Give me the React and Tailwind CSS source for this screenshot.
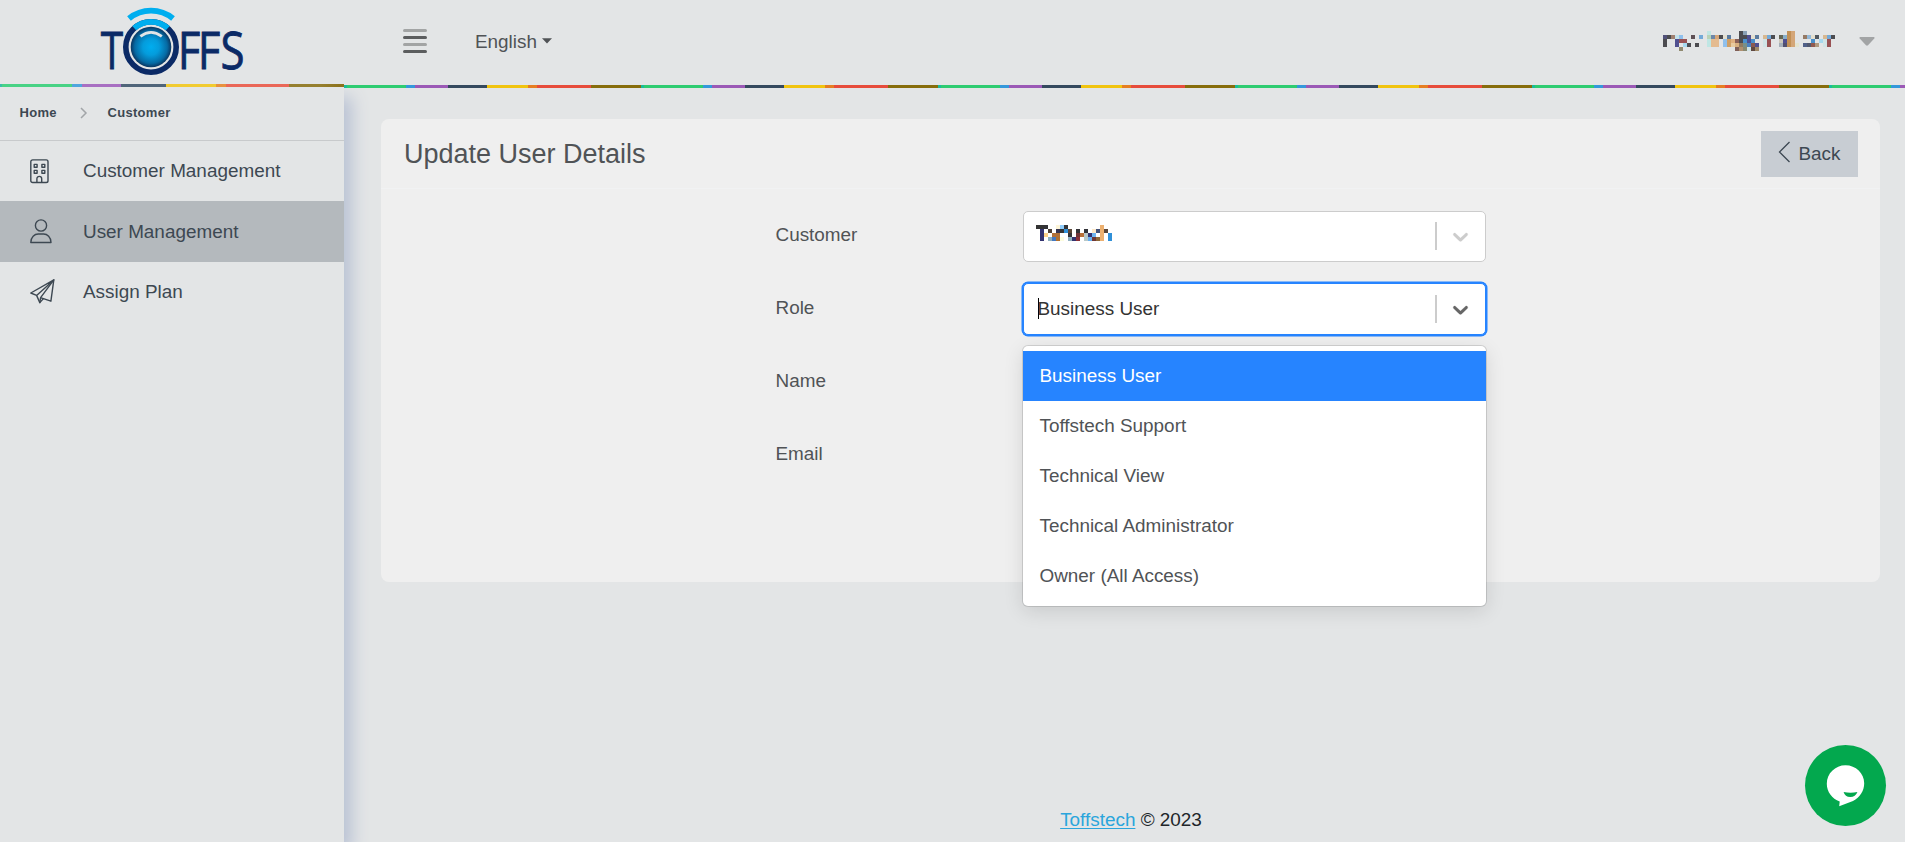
import React from "react";

const N = "#505090", D = "#4c4c50", R = "#985254", C = "#bfe6e4", B = "#90c0ec", M = "#4a90cc", O = "#e4bb90", G = "#c29055", H = "#d4a678", L = "#d0e4e6", S = "#74aad8", T = "#d8b890";

const userCells = [
  { 11: C, 19: D, 20: "#8aa0b5", 31: G, 32: H },
  { 0: "#52527a", 1: D, 2: "#a08070", 3: "#c5e2ea", 4: B, 7: "#5e5055", 9: S, 11: "#b9d3b8", 12: "#6c87a8", 13: H, 14: D, 15: "#e4dfcf", 16: "#5a7a9e", 19: D, 20: D, 21: N, 22: "#e4dfcf", 23: "#5a7a9e", 25: T, 26: S, 27: D, 29: "#666655", 30: "#88aec8", 31: G, 32: H, 35: "#957a65", 36: "#93b8d8", 37: "#e4dfcf", 38: "#505860", 40: T, 41: S, 42: D },
  { 0: D, 3: N, 4: R, 5: R, 11: C, 12: O, 13: O, 15: B, 16: "#cf9f66", 17: "#dfb080", 18: "#8a6058", 19: D, 20: M, 21: N, 22: M, 25: L, 26: R, 29: "#ccc8bb", 30: N, 31: G, 32: H, 37: M, 39: "#a5d8ee", 40: L, 41: R },
  { 0: D, 3: N, 5: "#a5d8ee", 6: D, 8: D, 11: C, 12: O, 13: O, 15: B, 16: "#cf9f66", 17: "#e8cba0", 18: "#d8b080", 19: "#907a60", 20: "#788f88", 21: "#4a80c0", 22: "#8a5a50", 23: N, 25: L, 26: R, 29: "#a5b0ba", 30: "#505070", 31: G, 32: H, 33: "#e4e4d0", 35: "#506088", 36: "#505870", 37: "#905a50", 38: "#b09a80", 40: L, 41: R },
  { 4: "#908a70", 18: "#806058", 19: "#b09070", 20: "#888870", 21: L, 22: "#604840", 23: "#a08a68" },
];

const customerCells = [
  { 0: "#333333", 1: "#333333", 2: "#333338", 5: "#fdf5d8", 6: "#90ccfa", 7: "#333336", 16: "#ecb070" },
  { 1: "#333370", 3: "#4e4036", 5: "#333350", 6: "#333333", 7: "#3090d8", 8: "#5a4638", 10: "#333338", 12: "#333338", 14: "#fde8c8", 15: "#42527a", 16: "#ecb070", 17: "#5a4638" },
  { 1: "#333370", 2: "#fdd088", 4: "#b07038", 5: "#b07038", 8: "#333336", 10: "#703438", 11: "#b87038", 12: "#b8c8c8", 13: "#333370", 14: "#70b4f0", 16: "#ecb070", 18: "#3090d8" },
  { 1: "#333370", 3: "#90b0c0", 4: "#4478c0", 5: "#b07030", 6: "#fdfde0", 8: "#90b0c0", 9: "#333370", 10: "#8a3038", 12: "#b8c8c8", 13: "#68b0f0", 14: "#703838", 15: "#906838", 16: "#ecb070", 18: "#3090d8" },
];

function Mosaic({ rows, cols }) {
  return (
    <svg width={cols * 4} height={rows.length * 4} shapeRendering="crispEdges" className="block shrink-0">
      {rows.map((row, y) =>
        Object.entries(row).map(([x, fill]) => (
          <rect key={x + "-" + y} x={x * 4} y={y * 4} width="4" height="4" fill={fill} />
        ))
      )}
    </svg>
  );
}

function Logo() {
  return (
    <svg width="160" height="90" viewBox="90 0 160 90" className="block shrink-0">
      <defs>
        <radialGradient id="ball">
          <stop offset="0" stopColor="#00adef" />
          <stop offset="0.4" stopColor="#049cdc" />
          <stop offset="0.8" stopColor="#066aa3" />
          <stop offset="1" stopColor="#0a3560" />
        </radialGradient>
      </defs>
      <g fill="#0b2a66" stroke="#0b2a66" strokeWidth="0.8" fontFamily="'Open Sans', 'Noto Sans', sans-serif" fontSize="51">
        <text x="100.8" y="69.300" textLength="22.400" lengthAdjust="spacingAndGlyphs">T</text>
        <text x="206.600 229.900 256.400" y="69.300" transform="scale(0.86 1)">FFS</text>
      </g>
      <circle cx="151" cy="47" r="25.2" fill="none" stroke="#0b2a66" strokeWidth="5.6" />
      <path d="M134.2 28.2A25.2 25.2 0 0 1 167.8 28.2" fill="none" stroke="#00aeef" strokeWidth="5.8" />
      <path d="M129 18.6A34.6 34.6 0 0 1 173 18.6" fill="none" stroke="#00aeef" strokeWidth="5.8" />
      <circle cx="151" cy="47" r="20.3" fill="url(#ball)" />
      <path d="M140.4 36.4Q151 28.4 161.8 36.4" fill="none" stroke="#e3e5e6" strokeWidth="2.8" />
    </svg>
  );
}

const ink = { fill: "none", stroke: "#3d4852", strokeLinejoin: "round", strokeLinecap: "round" };

function BuildingIcon() {
  return (
    <svg width="25" height="25" viewBox="0 0 25 25" {...ink} strokeWidth="1.4">
      <rect x="0.8" y="0.9" width="17.2" height="22.6" rx="1.8" />
      <rect x="4.2" y="5.4" width="2.9" height="2.9" />
      <rect x="11.9" y="5.4" width="2.9" height="2.9" />
      <rect x="4.2" y="11.4" width="2.9" height="2.9" />
      <rect x="11.9" y="11.4" width="2.9" height="2.9" />
      <path d="M6.9 23.4v-3.6a2.4 2.4 0 0 1 4.8 0v3.6" />
    </svg>
  );
}

function UserIcon() {
  return (
    <svg width="25" height="25" viewBox="0 0 25 25" {...ink} strokeWidth="1.4">
      <circle cx="11" cy="6.5" r="5.6" />
      <path d="M.8 23.5C.8 18 4.600 15 8.200 15H13.600C17.200 15 21 18 21 23.500Z" />
    </svg>
  );
}

function PlaneIcon() {
  return (
    <svg width="25" height="25" viewBox="0 0 25 25" {...ink} strokeWidth="1.4">
      <path d="M23.800 .9.8 14l5.800 2.400L23.800.9 20.900 22.200l-7.500-2.600L9.800 23.600 6.600 16.400" />
      <path d="M23.800.9 10.600 18.600l2.800 1M10.600 18.600l-.8 5" />
    </svg>
  );
}

function Field({ label, children }) {
  return (
    <div className="flex h-[73px] items-start">
      <div className="w-[247.500px] shrink-0 pt-3 leading-[24px]">{label}</div>
      {children}
    </div>
  );
}

function Indicator({ color }) {
  return (
    <>
      <div className="h-7 w-[2px] bg-[#cccccc]" />
      <div className="flex w-12 justify-center pr-[2px]">
        <svg width="25" height="25" viewBox="0 0 20 20" fill={color} stroke={color} strokeWidth="0.2">
          <path d="M4.516 7.548c0.436-0.446 1.043-0.481 1.576 0l3.908 3.747 3.908-3.747c0.533-0.481 1.141-0.446 1.574 0 0.436 0.445 0.408 1.197 0 1.615-0.406 0.418-4.695 4.502-4.695 4.502-0.217 0.223-0.502 0.335-0.787 0.335s-0.570-0.112-0.789-0.335c0 0-4.287-4.084-4.695-4.502s-0.436-1.170 0-1.615z" />
        </svg>
      </div>
    </>
  );
}

const menu = [
  { label: "Customer Management", Icon: BuildingIcon },
  { label: "User Management", Icon: UserIcon, active: true },
  { label: "Assign Plan", Icon: PlaneIcon },
];

const roles = ["Business User", "Toffstech Support", "Technical View", "Technical Administrator", "Owner (All Access)"];

export default function App() {
  return (
    <div className="flex h-[842px] w-[1905px] overflow-hidden bg-[#e3e5e6] font-['Liberation_Sans',Arial,sans-serif] text-[18.9px] text-[#505356]">
      <aside className="flex w-[344px] shrink-0 flex-col">
        <div className="relative z-20 bg-[#e3e5e6]">
          <div className="flex h-[84px] items-start pl-[90px]">
            <Logo />
          </div>
          <div className="relative h-[3px] bg-[linear-gradient(90deg,#38c0a5_0_2px,#48d285_2px_72px,#4fa5de_72px_82px,#a86fc2_82px_121px,#50657a_121px_166px,#f1cb31_166px_216px,#e8913f_216px_226px,#ea6758_226px_289px,#96802f_289px_320px,#8b701a_344px)]" />
        </div>
        <nav className="relative z-10 flex-1 bg-[#e3e5e6] shadow-[8px_10px_16px_#b9c2d4]">
          <div className="flex h-[54px] items-center border-b border-[#c8cacc] pb-[2px] pl-[19.500px] text-[13px] font-bold tracking-[0.3px] text-[#3d4852]">
            <span className="w-[60.500px]">Home</span>
            <svg width="8" height="12" viewBox="0 0 8 12" fill="none" stroke="#a2a5a8" strokeWidth="1.5">
              <path d="M1 1l5 5-5 5" />
            </svg>
            <span className="pl-[19.500px]">Customer</span>
          </div>
          {menu.map(({ label, Icon, active }, i) => (
            <div
              key={label}
              className={
                "flex items-center pl-[30px] text-[#3d4852] " +
                (active ? "h-[61px] bg-[#b4b9bd]" : i === 0 ? "h-[60px]" : "h-[60px] pb-px")
              }
            >
              <Icon />
              <span className="pt-px pl-7">{label}</span>
            </div>
          ))}
        </nav>
      </aside>

      <div className="flex flex-1 flex-col">
        <header className="relative z-20 bg-[#e3e5e6]">
          <div className="flex h-[85px] items-center pr-[30px] pl-[59px]">
            <div className="flex w-6 flex-col gap-[4px] pb-[3px]">
              <div className="h-[3px] rounded-full bg-[#a2a4a4]" />
              <div className="h-[3px] rounded-full bg-[#5b5d5e]" />
              <div className="h-[3px] rounded-full bg-[#a2a4a4]" />
              <div className="h-[3px] rounded-full bg-[#5b5d5e]" />
            </div>
            <div className="flex items-center pb-px pl-12">
              <span>English</span>
              <svg width="10" height="6" viewBox="0 0 10 6" fill="#505356" className="mb-[2px] ml-[5px]">
                <path d="M0 .3h10L5 5.500z" />
              </svg>
            </div>
            <div className="ml-auto flex items-center pb-[3px]">
              <Mosaic rows={userCells} cols={43} />
              <svg width="16" height="9" viewBox="0 0 16 9" fill="#a2a4a5" className="ml-6">
                <path d="M1.200 0h13.600q1.200.3.500 1.400L9 8.300q-1 .9-2 0L.7 1.400Q0 .3 1.200 0z" />
              </svg>
            </div>
          </div>
          <div className="h-[3px] bg-[repeating-linear-gradient(90deg,#1abc9c_0_3px,#2ecc71_3px_62px,#3498db_62px_71px,#9b59b6_71px_104px,#34495e_104px_143px,#f1c40f_143px_184px,#e67e22_184px_193px,#e74c3c_193px_247px,#876d0c_247px_297px)]" />
        </header>

        <main className="relative flex flex-1 flex-col pt-[31px] pr-[25px] pl-[37px]">
          <section className="h-[463px] rounded-lg bg-[#efefef]">
            <div className="flex h-[70px] items-start justify-between border-b border-[#f1f2f3] pt-3 pr-[22px] pl-[23px]">
              <h1 className="pt-[7px] text-[27px] leading-[32px]">Update User Details</h1>
              <button className="flex h-[46px] w-[97px] items-center bg-[#c8cdd3] pl-[17px] text-[#3d4852]">
                <svg width="13" height="22" viewBox="0 0 13 22" fill="none" stroke="#3d4852" strokeWidth="1.300" className="mb-1">
                  <path d="M11.500 1 1.500 11l10 10" />
                </svg>
                <span className="pl-[7.500px]">Back</span>
              </button>
            </div>
            <div className="pt-[22px] pl-[394.500px]">
              <Field label="Customer">
                <div className="flex h-[51px] w-[463px] items-center rounded-[5px] border border-[#cccccc] bg-white">
                  <div className="flex-1 pb-[7px] pl-3">
                    <Mosaic rows={customerCells} cols={19} />
                  </div>
                  <div className="flex items-center pb-px">
                    <Indicator color="#cccccc" />
                  </div>
                </div>
              </Field>
              <Field label="Role">
                <div className="relative -mt-px">
                  <div className="flex h-[52px] w-[463px] items-center rounded-[5px] border border-[#2684ff] bg-white shadow-[0_0_0_1px_#2684ff,0_0_0_1.5px_#2684ff]">
                    <div className="flex flex-1 items-center pl-[14px] text-[#333333]">
                      <div className="h-[21px] w-px bg-black" />
                      <span className="-ml-[1.500px]">Business User</span>
                    </div>
                    <Indicator color="#666666" />
                  </div>
                  <div className="absolute top-[63px] left-0 z-30 w-[463px] rounded-[5px] bg-white py-[5px] shadow-[0_0_0_1px_rgba(0,0,0,0.12),0_5px_20px_rgba(0,0,0,0.12)]">
                    {roles.map((role, i) => (
                      <div
                        key={role}
                        className={
                          "flex h-[50px] items-center pl-[16.500px] " + (i === 0 ? "bg-[#2684ff] pt-px text-white" : "")
                        }
                      >
                        {role}
                      </div>
                    ))}
                  </div>
                </div>
              </Field>
              <Field label="Name" />
              <Field label="Email" />
            </div>
          </section>
          <footer className="mt-auto pl-px pb-[11px] text-center leading-[22px] text-[#212529]">
            <a className="text-[#2aa5dc] underline underline-offset-2">Toffstech</a> © 2023
          </footer>
        </main>
      </div>

      <div className="absolute top-[745px] left-[1805px] z-40 flex h-[81px] w-[81px] items-center justify-center rounded-full bg-[#03a84e]">
        <svg width="81" height="81" viewBox="0 0 81 81" fill="#fff">
          <path d="M40.500 20.300C50.800 20.300 59.200 28.300 59.200 38.300C59.200 46 55 52.300 48 56L34.200 61.300L34.700 56.600C27 53.600 21.800 47 21.800 38.800C21.800 28.500 30.200 20.300 40.500 20.300Z" />
          <path d="M38.600 47Q45.500 48.600 52.400 47Q50.500 52 45.300 52Q40 52 38.600 47Z" fill="#03a84e" />
        </svg>
      </div>
    </div>
  );
}
